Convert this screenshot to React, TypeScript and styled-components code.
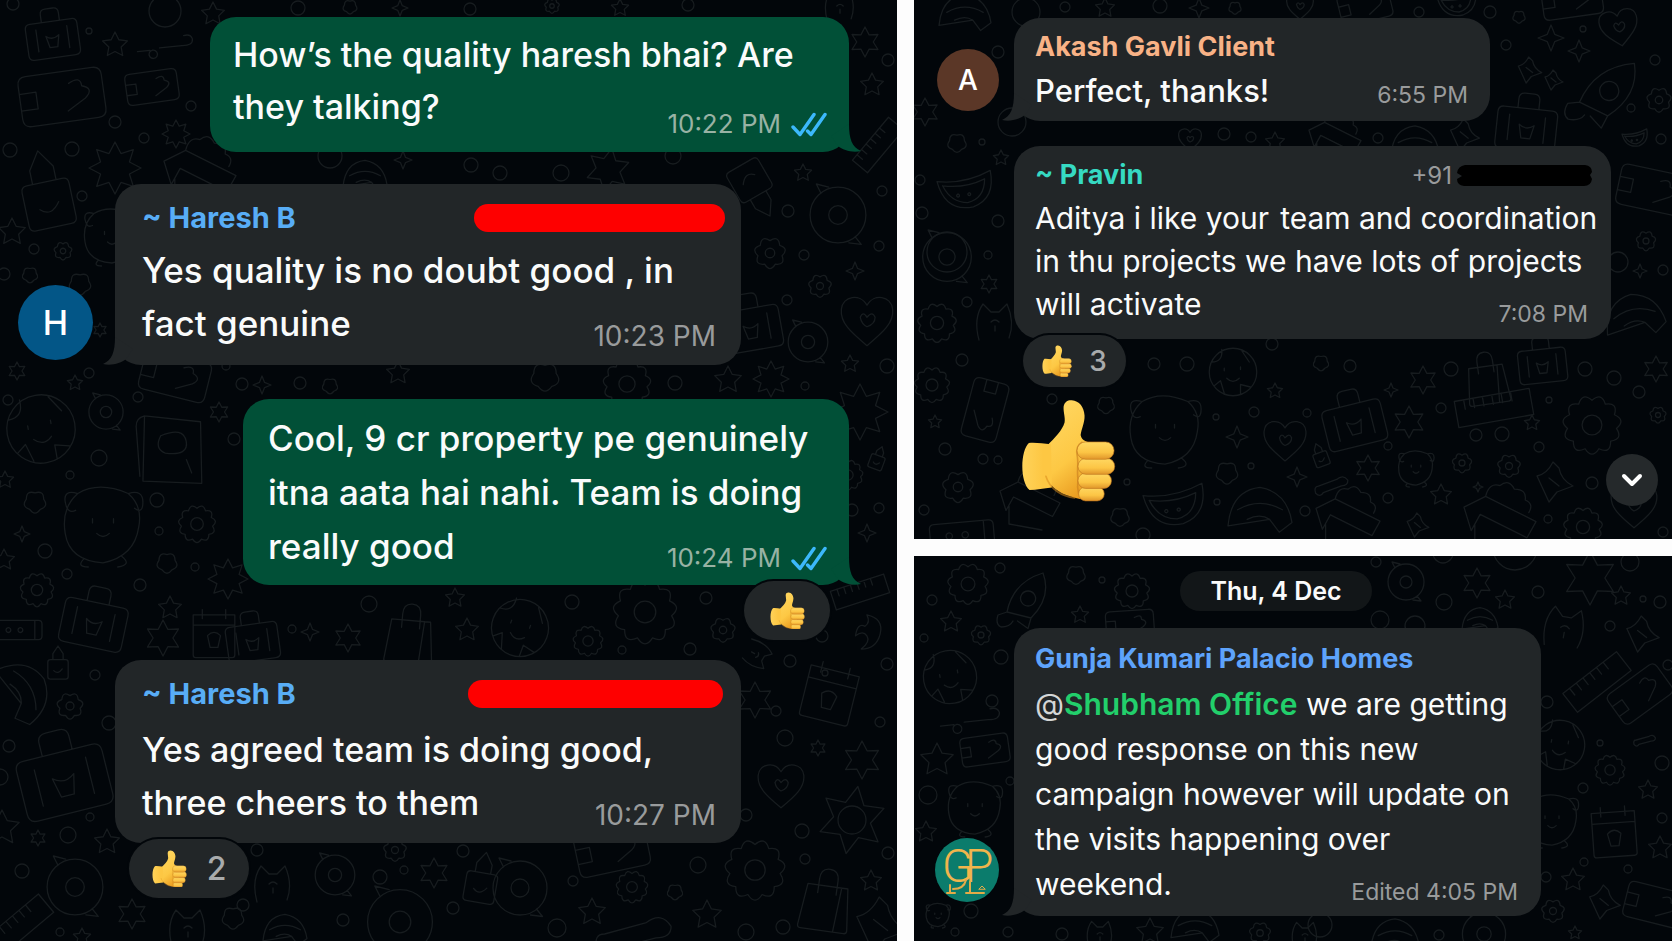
import React from 'react';
import styled, { createGlobalStyle } from 'styled-components';
import { ChevronDown } from 'lucide-react';

const GlobalStyle = createGlobalStyle`
  *, *::before, *::after { box-sizing: border-box; }
  body {
    margin: 0;
    background: #fdfdfd;
    font-family: Inter, Roboto, 'Liberation Sans', sans-serif;
    -webkit-font-smoothing: antialiased;
  }
  p, h2, time { margin: 0; }
`;

/* ---------- wallpaper ---------- */

type Doodle = [kind: string, x: number, y: number, size?: number, turn?: number];

const polar = (r: number, a: number) =>
  `${(r * Math.sin(a)).toFixed(1)} ${(-r * Math.cos(a)).toFixed(1)}`;

const starPath = (points: number, outer: number, inner: number) => {
  const parts: string[] = [];
  for (let i = 0; i < points * 2; i++) {
    parts.push(polar(i % 2 ? inner : outer, (Math.PI * i) / points));
  }
  return `M${parts.join('L')}Z`;
};

const wavyPath = (lobes: number, r: number, depth: number) => {
  let d = `M${polar(r - depth, 0)}`;
  for (let i = 0; i < lobes; i++) {
    const mid = (Math.PI * 2 * (i + 0.5)) / lobes;
    const end = (Math.PI * 2 * (i + 1)) / lobes;
    d += `Q${polar(r + depth, mid)} ${polar(r - depth, end)}`;
  }
  return `${d}Z`;
};

const circle = (x: number, y: number, r: number) =>
  `M${x - r} ${y}a${r} ${r} 0 1 0 ${2 * r} 0a${r} ${r} 0 1 0 ${-2 * r} 0`;

/* every shape is drawn about its centre inside a radius of 20 */
const shapes: Record<string, string> = {
  dot: circle(0, 0, 20),
  star: starPath(5, 20, 10),
  star4: starPath(4, 20, 8),
  star6: starPath(6, 20, 11),
  star8: starPath(8, 20, 12),
  gear: wavyPath(11, 18, 3) + circle(0, 0, 6),
  flower: wavyPath(7, 17, 4) + circle(0, 0, 5),
  cloud: wavyPath(5, 17, 4),
  donut: circle(0, 0, 18) + circle(0, 0, 6) + 'M-11 -14l-3 -6l8 2M11 14l4 5l-8 -1',
  heart: 'M0 19C-12 9 -20 2 -19 -8C-18 -18 -5 -20 0 -11C5 -20 18 -18 19 -8C20 2 12 9 0 19ZM-5 -2q2 -5 5 0q4 -5 6 0q0 5 -6 7q-4 -2 -5 -7',
  case: 'M-16 -9h32q4 0 4 4v20q0 4 -4 4h-32q-4 0 -4 -4v-20q0 -4 4 -4ZM-7 -9v-6q0 -4 4 -4h6q4 0 4 4v6M-12 -4v17M12 -4v17M-5 2q5 4 10 0l-2 9h-6Z',
  bag: 'M-13 -9h26l3 27q0 2 -2 2h-28q-2 0 -2 -2ZM-6 -4v-9q0 -7 6 -7t6 7v9M9 -9l-2 29',
  card: 'M-16 -12h32q4 0 4 4v16q0 4 -4 4h-32q-4 0 -4 -4v-16q0 -4 4 -4ZM-20 -4h8v8h-8M4 -6q6 -3 6 2q6 2 1 6l-9 5',
  phone: 'M-17 -8h34q3 0 3 3v10q0 3 -3 3h-34q-3 0 -3 -3v-10q0 -3 3 -3ZM-6 0a2 2 0 1 0 0 .1M4 0a2 2 0 1 0 0 .1M14 -8v16',
  face: circle(0, 0, 19) + 'M-17 -8q9 0 8 -10M7 -17l6 9M-7 -3v2M6 -4v2M-5 5q5 5 10 0M-15 11l5 -4l3 10M14 12l-8 -2v8',
  bear: 'M-12 -15q10 -6 24 0q7 6 5 16q-2 14 -17 17q-16 -1 -18 -14q-2 -12 6 -19ZM-12 -15q-7 -2 -6 4t5 4M12 -15q7 -2 7 4t-4 3M-5 -3v2M5 -3v2M-3 4q3 3 6 0M-9 16q-4 4 2 4M9 15q5 4 -2 5',
  bottle: 'M-9 -4h18q3 0 3 3v17q0 3 -3 3h-18q-3 0 -3 -3v-17q0 -3 3 -3ZM-6 -4v-7l6 -9l6 9v7M-5 9q5 5 10 -2',
  wand: 'M-20 2h9M-9 2a3 3 0 1 0 .1 0M-4 1h16M12 1q8 1 8 -4q-1 -4 -6 -3',
  rocket: 'M-12 8q4 -20 24 -26q6 16 -8 30ZM-12 8l-6 2q-2 6 2 8q6 0 8 -4M2 -6a5 5 0 1 0 .1 0M-12 8l16 4l-2 7l-7 -5',
  melon: 'M-20 -6q20 2 38 -8q4 20 -12 26q-20 4 -26 -18ZM-16 -3q16 2 30 -5q0 14 -12 17q-12 0 -18 -12M-5 3a1 1 0 1 0 .1 0M3 2a1 1 0 1 0 .1 0',
  book: 'M-16 -14l28 -3l7 30l-29 5ZM-16 -14q-4 2 -3 6l7 24M-6 -6q10 -7 13 0t-9 8q-6 -1 -4 -8M9 3l4 6',
  crate: 'M-20 -6l12 -6l28 14l-5 9l-26 -13l-5 9ZM-8 -12q2 -8 8 -6q5 -4 8 2q7 0 6 6q5 2 2 7M-14 4l0 12l22 4',
  calendar: 'M-16 -14h32v31q0 2 -2 2h-28q-2 0 -2 -2ZM-16 -6h32M-9 -18v7M9 -18v7M-5 2q5 -5 10 0l-2 9h-6Z',
  ruler: 'M-20 -7h40v14h-40ZM-15 -7v5M-10 -7v5M-5 -7v5M0 -7v5M5 -7v5M10 -7v5',
  hat: 'M-20 8q2 -22 20 -24q17 3 20 22l-8 6l-6 -8ZM-14 -2q14 -8 28 0M-8 4q8 -4 14 0',
  moon: 'M2 -18q18 4 14 20t-20 16q10 -8 6 -14t-12 0q2 -14 10 -10q6 -4 2 -12',
  wrench: 'M-20 8q-2 -8 4 -8l22 -6q8 -6 13 2q0 6 -8 6l-22 6q-4 6 -9 0Z',
  cat: 'M-16 18q-6 -22 4 -36l8 8h8l8 -8q8 18 2 34M-4 0q4 -4 8 0M0 4v5',
  sheet: 'M-18 -6q10 -2 16 -14l6 6q2 12 14 18l-16 6l-8 10ZM-6 -4l10 8',
};

const leftDoodles: Doodle[] = [
  ['case', 52, 33, 26, -8], ['dot', 165, 11, 16], ['dot', 89, 31, 3], ['star', 115, 45, 13], ['wand', 165, 46, 28, -6],
  ['card', 62, 97, 42, -8], ['dot', 13, 4, 6], ['card', 152, 87, 26, -8], ['dot', 191, 106, 5], ['dot', 115, 122, 6],
  ['dot', 144, 138, 5], ['star8', 176, 134, 14], ['dot', 10, 150, 7], ['dot', 72, 149, 7], ['bottle', 46, 190, 40, -12],
  ['star8', 115, 168, 26], ['dot', 82, 196, 5], ['crate', 200, 172, 36], ['bear', 112, 236, 30], ['flower', 63, 251, 11],
  ['dot', 34, 249, 5], ['dot', 4, 274, 6], ['cloud', 30, 275, 10], ['cloud', 80, 284, 14], ['star', 12, 232, 14], ['star6', 17, 371, 9],
  ['star', 75, 383, 8], ['dot', 89, 373, 5], ['card', 175, 376, 34, 14], ['dot', 242, 384, 6], ['star4', 262, 385, 9],
  ['dot', 300, 383, 6], ['star', 398, 373, 12], ['cloud', 330, 386, 10], ['dot', 226, 366, 4], ['star6', 100, 330, 7],
  ['dot', 8, 400, 5], ['star', 213, 14, 12], ['dot', 298, 8, 7], ['cloud', 350, 7, 9], ['star4', 400, 8, 8], ['dot', 470, 9, 6], ['flower', 552, 6, 9],
  ['star', 620, 8, 9], ['dot', 688, 5, 6], ['cat', 840, 6, 16], ['dot', 330, 156, 12], ['hat', 365, 178, 22], ['star4', 403, 160, 9],
  ['face', 41, 429, 36, -10], ['donut', 106, 412, 19], ['dot', 138, 397, 5], ['star6', 219, 412, 10], ['book', 170, 450, 40, 12],
  ['dot', 99, 458, 8], ['dot', 70, 475, 4], ['dot', 234, 439, 6], ['star', 5, 480, 9], ['cloud', 35, 502, 14],
  ['bear', 103, 525, 42], ['dot', 157, 500, 7], ['dot', 159, 531, 4], ['gear', 197, 524, 21], ['star4', 22, 534, 8],
  ['dot', 45, 551, 7], ['cloud', 167, 563, 13], ['dot', 195, 567, 4], ['star8', 228, 579, 20], ['star', 4, 560, 11],
  ['gear', 37, 590, 19], ['dot', 67, 574, 5], ['case', 95, 617, 32, 12], ['dot', 140, 585, 6], ['star', 170, 608, 12],
  ['star6', 163, 638, 18], ['phone', 18, 630, 24], ['calendar', 214, 633, 26], ['case', 252, 636, 26, -8], ['dot', 292, 629, 4],
  ['star4', 310, 632, 9], ['star6', 348, 638, 14], ['dot', 369, 604, 8], ['bag', 410, 634, 30, 5], ['bottle', 58, 663, 17],
  ['hat', 22, 692, 32, 60], ['dot', 95, 675, 5], ['flower', 70, 706, 16], ['dot', 109, 723, 7], ['dot', 9, 746, 6],
  ['case', 62, 772, 44, -14], ['dot', 0, 777, 8], ['dot', 68, 835, 8], ['star6', 38, 838, 8], ['star', 107, 842, 13],
  ['star', 2, 828, 18], ['dot', 90, 817, 4], ['dot', 22, 871, 7], ['donut', 75, 887, 31], ['star6', 132, 914, 15], ['dot', 60, 932, 4],
  ['ruler', 20, 925, 34, -40], ['star', 82, 937, 9], ['cat', 273, 884, 20], ['donut', 335, 875, 22], ['dot', 380, 877, 7],
  ['dot', 404, 870, 4], ['star6', 434, 873, 15], ['cloud', 233, 918, 14], ['dot', 243, 905, 6], ['dot', 343, 920, 6],
  ['cat', 188, 928, 20], ['hat', 285, 932, 22], ['donut', 400, 922, 36], ['dot', 257, 850, 6], ['flower', 395, 850, 14],
  ['star6', 865, 42, 15], ['ruler', 878, 145, 28, -50], ['dot', 471, 165, 7], ['dot', 500, 173, 7], ['star6', 608, 170, 22, 10],
  ['dot', 561, 173, 8], ['dot', 673, 156, 8], ['star', 803, 173, 9], ['bottle', 755, 190, 30, 150], ['donut', 838, 215, 31],
  ['dot', 788, 211, 6], ['dot', 882, 191, 5], ['dot', 879, 246, 5], ['flower', 770, 253, 19], ['dot', 804, 255, 5],
  ['star4', 855, 271, 9], ['flower', 820, 286, 14], ['dot', 787, 300, 5], ['heart', 867, 320, 27], ['case', 750, 322, 30, -10],
  ['donut', 808, 342, 22], ['star', 850, 364, 9], ['dot', 887, 366, 7], ['star8', 771, 379, 18], ['gear', 627, 384, 27],
  ['cloud', 545, 377, 18], ['dot', 675, 383, 7], ['star', 728, 380, 14], ['dot', 805, 386, 4], ['star8', 860, 412, 28], ['bottle', 878, 458, 12, 20],
  ['gear', 848, 475, 17], ['dot', 852, 510, 6], ['dot', 879, 508, 5], ['star4', 867, 533, 9], ['star', 872, 85, 12], ['dot', 888, 60, 6],
  ['star', 455, 598, 10], ['face', 520, 628, 30, 20], ['dot', 572, 602, 7], ['gear', 645, 612, 36], ['star', 467, 630, 12],
  ['gear', 588, 641, 17], ['flower', 723, 630, 15], ['dot', 690, 649, 6], ['dot', 706, 598, 6], ['moon', 865, 632, 19],
  ['ruler', 860, 592, 28, -18], ['cat', 757, 655, 14, 120], ['dot', 790, 661, 6], ['dot', 822, 636, 6], ['dot', 622, 650, 4],
  ['calendar', 830, 692, 31, 14], ['star6', 755, 700, 18], ['dot', 785, 738, 8], ['dot', 776, 711, 5], ['star6', 818, 748, 8],
  ['star6', 862, 760, 19], ['heart', 781, 785, 24], ['star6', 852, 820, 34, 10], ['dot', 852, 820, 14], ['dot', 825, 673, 3],
  ['dot', 880, 722, 5], ['dot', 746, 815, 6], ['dot', 802, 831, 7], ['gear', 755, 870, 34], ['dot', 805, 859, 5],
  ['bag', 826, 900, 31, 8], ['star', 871, 881, 11], ['star', 707, 915, 15], ['gear', 632, 887, 18], ['dot', 698, 865, 8],
  ['cloud', 675, 892, 10], ['star', 592, 912, 14], ['donut', 520, 888, 30], ['bottle', 482, 878, 26, 10], ['dot', 573, 881, 5],
  ['dot', 463, 851, 6], ['dot', 453, 908, 6], ['dot', 557, 928, 9], ['dot', 746, 932, 8], ['dot', 783, 927, 7],
  ['wrench', 635, 934, 38], ['card', 612, 850, 36, -12], ['sheet', 882, 925, 28], ['dot', 888, 853, 6], ['dot', 887, 664, 6],
];

const topDoodles: Doodle[] = [
  ['hat', 965, 15, 26], ['dot', 1026, 12, 14], ['dot', 1065, 7, 5], ['star', 1105, 8, 10], ['dot', 1160, 6, 7], ['star4', 1199, 8, 10], ['cloud', 1235, 8, 8],
  ['heart', 1300, 6, 14], ['card', 1365, 6, 26, -14], ['dot', 998, 52, 6], ['star6', 925, 112, 14], ['cloud', 957, 143, 12],
  ['dot', 982, 142, 3], ['star', 1001, 158, 8], ['melon', 965, 190, 28], ['dot', 920, 180, 5], ['dot', 922, 213, 6],
  ['dot', 998, 221, 6], ['donut', 947, 257, 27], ['dot', 947, 252, 20], ['dot', 988, 255, 4], ['star6', 989, 284, 9], ['gear', 937, 323, 22],
  ['cat', 995, 322, 20], ['dot', 967, 302, 5], ['dot', 1012, 122, 14], ['dot', 1251, 137, 5], ['dot', 1224, 134, 6], ['heart', 1190, 139, 12], ['star', 1275, 142, 10],
  ['crate', 1335, 138, 26], ['dot', 1378, 138, 5], ['hat', 1415, 145, 24], ['sheet', 1465, 135, 16],
  ['dot', 1419, 12, 5], ['melon', 1457, 3, 20], ['dot', 1490, 12, 6], ['card', 1572, -1, 30, -8], ['cloud', 1519, 17, 8],
  ['dot', 1506, 45, 5], ['star4', 1551, 38, 13], ['star4', 1579, 51, 11], ['heart', 1619, 27, 20, -10], ['dot', 1583, 29, 3],
  ['rocket', 1605, 92, 38, 12], ['dot', 1655, 60, 5], ['flower', 1659, 100, 15], ['sheet', 1530, 70, 13], ['sheet', 1554, 80, 10],
  ['case', 1527, 122, 30, 6], ['dot', 1631, 108, 4], ['melon', 1635, 138, 13], ['dot', 1661, 139, 5], ['card', 1652, 190, 34, 12],
  ['flower', 1646, 241, 12], ['dot', 1618, 262, 10], ['star4', 1640, 271, 7], ['dot', 1663, 270, 5], ['hat', 1635, 318, 30, -10],
  ['cloud', 1321, 363, 10], ['dot', 1350, 366, 6], ['star6', 1423, 380, 14], ['dot', 1451, 369, 7], ['bag', 1487, 378, 26, -8],
  ['ruler', 1494, 408, 38, -10], ['case', 1542, 360, 24, -6], ['dot', 1585, 369, 7], ['dot', 1614, 378, 7], ['star6', 1656, 369, 13],
  ['case', 1353, 418, 30, -14], ['star6', 1409, 422, 16], ['dot', 1441, 408, 5], ['star4', 1391, 390, 7], ['dot', 1307, 413, 4],
  ['dot', 1476, 435, 6], ['dot', 1502, 434, 7], ['star', 1532, 423, 8], ['dot', 1549, 400, 3], ['gear', 1592, 425, 33],
  ['dot', 1639, 392, 6], ['flower', 1658, 415, 10], ['star6', 1368, 468, 13], ['dot', 1388, 446, 4], ['bear', 1416, 468, 19],
  ['flower', 1462, 463, 12], ['flower', 1509, 466, 14], ['dot', 1539, 447, 5], ['sheet', 1555, 482, 20], ['dot', 1592, 483, 6],
  ['wrench', 1332, 485, 17, -5], ['star', 1441, 495, 11], ['dot', 1388, 498, 5], ['star4', 1478, 487, 5], ['crate', 1348, 518, 32],
  ['crate', 1500, 518, 36], ['dot', 1548, 519, 4], ['gear', 1583, 527, 22], ['heart', 1634, 505, 24], ['dot', 1305, 511, 5],
  ['sheet', 1418, 525, 12], ['dot', 1663, 532, 5], ['bottle', 1320, 455, 12, -20],
  ['gear', 932, 385, 20], ['dot', 962, 360, 6], ['card', 985, 410, 30, 105], ['dot', 1052, 399, 5], ['cloud', 1106, 405, 11],
  ['star', 935, 422, 7], ['dot', 945, 449, 6], ['dot', 983, 459, 5], ['dot', 998, 460, 4], ['flower', 958, 487, 19],
  ['crate', 1030, 500, 30], ['cloud', 1120, 517, 12], ['dot', 924, 510, 5], ['phone', 962, 535, 32, -5], ['dot', 1154, 364, 6],
  ['dot', 1187, 364, 7], ['face', 1233, 372, 25], ['star', 1275, 391, 8], ['dot', 1272, 344, 6], ['bear', 1165, 430, 38],
  ['dot', 1216, 417, 3], ['dot', 1254, 412, 5], ['star4', 1237, 437, 11], ['cloud', 1227, 473, 14], ['heart', 1285, 440, 22],
  ['star4', 1297, 477, 10], ['dot', 1251, 466, 3], ['melon', 1174, 505, 31], ['hat', 1260, 513, 32], ['dot', 1217, 502, 3],
  ['dot', 1143, 535, 7], ['dot', 1127, 482, 3],
];

const bottomDoodles: Doodle[] = [
  ['gear', 968, 584, 23], ['dot', 1000, 568, 5], ['dot', 932, 600, 5], ['cloud', 1076, 575, 12], ['dot', 1102, 580, 3],
  ['gear', 1132, 591, 20], ['rocket', 1025, 600, 30], ['star', 951, 622, 11], ['dot', 924, 638, 4], ['flower', 981, 635, 12],
  ['star', 1080, 615, 9], ['card', 1130, 625, 24, -4], ['face', 950, 677, 28, -10], ['dot', 992, 701, 6], ['dot', 1001, 657, 7], ['wand', 970, 720, 30, -6],
  ['star', 937, 760, 17], ['card', 985, 750, 24, -8], ['dot', 928, 795, 9], ['bear', 975, 808, 29], ['star', 926, 832, 11], ['dot', 1010, 781, 4],
  ['dot', 971, 911, 7], ['bear', 938, 915, 13], ['dot', 955, 932, 4], ['flower', 1260, 933, 13], ['hat', 1195, 928, 24],
  ['dot', 1008, 932, 5], ['star', 1150, 932, 14], ['dot', 1062, 934, 6], ['cat', 1100, 934, 14], ['cat', 1305, 935, 14],
  ['donut', 1406, 582, 20], ['star6', 1477, 583, 15], ['dot', 1444, 602, 8], ['dot', 1376, 562, 5], ['star', 1505, 600, 10],
  ['dot', 1538, 592, 6], ['star6', 1590, 578, 27], ['star', 1621, 596, 10], ['dot', 1643, 599, 3], ['dot', 1660, 602, 6],
  ['dot', 1515, 548, 22], ['dot', 1443, 553, 10], ['dot', 1630, 562, 9], ['cat', 1565, 628, 22, 10], ['dot', 1610, 626, 5], ['sheet', 1643, 634, 18],
  ['ruler', 1597, 682, 34, -38], ['card', 1640, 694, 30, -36], ['dot', 1547, 702, 6], ['face', 1560, 745, 26, 10], ['dot', 1600, 743, 3],
  ['wrench', 1645, 740, 11], ['gear', 1610, 770, 17], ['dot', 1662, 763, 7], ['dot', 1583, 788, 5], ['star', 1648, 790, 10],
  ['calendar', 1614, 831, 27, -4], ['dot', 1662, 818, 5], ['bear', 1552, 820, 28], ['star', 1660, 848, 12], ['dot', 1584, 862, 4],
  ['dot', 1628, 869, 4], ['star', 1573, 880, 12], ['sheet', 1605, 902, 17], ['flower', 1553, 911, 14], ['card', 1655, 905, 30, 14],
  ['dot', 1546, 877, 5], ['dot', 1439, 935, 5], ['donut', 1484, 934, 24], ['dot', 1320, 925, 12], ['hat', 1395, 938, 24],
  ['star', 1575, 933, 7], ['hat', 1480, 622, 18], ['dot', 1415, 626, 10], ['dot', 1380, 620, 9], ['dot', 1668, 665, 5],
];

const WallpaperSvg = styled.svg`
  position: absolute;
  inset: 0;
  width: 100%;
  height: 100%;
  z-index: 0;
  pointer-events: none;
  fill: none;
  stroke: #171c1f;
  stroke-linecap: round;
  stroke-linejoin: round;
`;

function Wallpaper({ view, doodles }: { view: string; doodles: Doodle[] }) {
  return (
    <WallpaperSvg viewBox={view} preserveAspectRatio="xMinYMin slice" aria-hidden="true">
      {doodles.map(([kind, x, y, size = 20, turn = 0], i) => (
        <path
          key={i}
          d={shapes[kind]}
          strokeWidth={1.3 / (size / 20)}
          transform={`translate(${x} ${y}) rotate(${turn}) scale(${size / 20})`}
        />
      ))}
    </WallpaperSvg>
  );
}

/* ---------- page ---------- */

const Page = styled.main`
  display: grid;
  grid-template-columns: minmax(0, 897fr) minmax(0, 758fr);
  column-gap: 17px;
  min-height: 100vh;
`;

const RightColumn = styled.div`
  display: grid;
  grid-template-rows: auto 1fr;
  row-gap: 17px;
`;

const Panel = styled.section<{ $pad: string }>`
  position: relative;
  display: flex;
  flex-direction: column;
  overflow: hidden;
  padding: ${(p) => p.$pad};
  background: #02060a;

  > * { flex-shrink: 0; }
`;

/* ---------- messages ---------- */

const Row = styled.article<{ $out?: boolean; $above?: number; $gap?: number }>`
  position: relative;
  display: flex;
  align-items: flex-end;
  justify-content: ${(p) => (p.$out ? 'flex-end' : 'flex-start')};
  gap: ${(p) => p.$gap ?? 22}px;
  margin-top: ${(p) => p.$above ?? 0}px;
`;

const Avatar = styled.div<{ $size: number; $color?: string; $lift?: number }>`
  display: grid;
  place-items: center;
  flex: none;
  width: ${(p) => p.$size}px;
  height: ${(p) => p.$size}px;
  margin-bottom: ${(p) => p.$lift ?? 0}px;
  border-radius: 50%;
  overflow: hidden;
  background: ${(p) => p.$color ?? 'transparent'};
  color: #fff;
  font-size: ${(p) => (p.$size > 70 ? 34 : 28)}px;
  font-weight: 500;
`;

const Bubble = styled.div<{ $width: number; $out?: boolean; $pad: string }>`
  position: relative;
  display: grid;
  width: ${(p) => p.$width}px;
  max-width: 100%;
  padding: ${(p) => p.$pad};
  border-radius: 26px;
  background: ${(p) => (p.$out ? '#015037' : '#222628')};
`;

const TailSvg = styled.svg<{ $out?: boolean }>`
  position: absolute;
  bottom: 0;
  ${(p) => (p.$out ? 'right: -12px; transform: scaleX(-1);' : 'left: -12px;')}
  fill: ${(p) => (p.$out ? '#015037' : '#222628')};
`;

function Tail({ out }: { out?: boolean }) {
  return (
    <TailSvg $out={out} width="30" height="28" viewBox="0 0 30 28" aria-hidden="true">
      <path d="M12 0C12 15 9 23 0 27C9 29 18 26 23 22L30 12Z" />
    </TailSvg>
  );
}

const Header = styled.header<{ $height: number; $bleed?: number }>`
  display: flex;
  align-items: center;
  height: ${(p) => p.$height}px;
  margin-right: ${(p) => -(p.$bleed ?? 0)}px;
`;

const Sender = styled.h2<{ $color: string; $size: number }>`
  margin-right: auto;
  color: ${(p) => p.$color};
  font-size: ${(p) => p.$size}px;
  font-weight: 700;
  line-height: 36px;
  white-space: nowrap;
`;

const Content = styled.div<{ $above?: number }>`
  display: grid;
  margin-top: ${(p) => p.$above ?? 0}px;
`;

const Body = styled.p<{ $size: number; $lead: number; $below?: number; $bleed?: number; $weight?: number }>`
  grid-area: 1 / 1;
  margin-right: ${(p) => -(p.$bleed ?? 0)}px;
  padding-bottom: ${(p) => p.$below ?? 0}px;
  color: #fafbfb;
  font-size: ${(p) => p.$size}px;
  font-weight: ${(p) => p.$weight ?? 450};
  line-height: ${(p) => p.$lead}px;
`;

const Meta = styled.div<{ $size: number; $out?: boolean; $lift?: number }>`
  grid-area: 1 / 1;
  align-self: end;
  justify-self: end;
  display: flex;
  align-items: center;
  gap: 10px;
  margin-bottom: ${(p) => p.$lift ?? 0}px;
  color: ${(p) => (p.$out ? '#98b2a4' : '#999b9c')};
  font-size: ${(p) => p.$size}px;
  line-height: 28px;
  white-space: nowrap;
`;

const Mention = styled.a`
  color: #22cf6b;
  font-weight: 600;
  text-decoration: none;
`;

const At = styled.span`
  color: #d4d6d6;
`;

const Redaction = styled.span<{ $width: number }>`
  width: ${(p) => p.$width}px;
  height: 28px;
  border-radius: 14px;
  background: #fe0000;
`;

const Phone = styled.span`
  display: flex;
  align-items: center;
  gap: 5px;
  color: #999b9c;
  font-size: 24px;
`;

const Reaction = styled.button<{ $large?: boolean; $single?: boolean; $left?: number; $right?: number }>`
  position: relative;
  display: flex;
  align-items: center;
  align-self: ${(p) => (p.$right ? 'flex-end' : 'flex-start')};
  justify-content: center;
  gap: ${(p) => (p.$large ? 20 : 17)}px;
  width: ${(p) => (p.$single ? 86 : p.$large ? 120 : 103)}px;
  height: ${(p) => (p.$large ? 59 : 52)}px;
  margin: -4px ${(p) => p.$right ?? 0}px 0 ${(p) => p.$left ?? 0}px;
  padding: 0;
  border: 0;
  border-radius: 30px;
  background: #222628;
  box-shadow: 0 0 0 2px #02060a;
  color: #a9abac;
  font-family: inherit;
  font-size: ${(p) => (p.$large ? 32 : 28)}px;
  font-weight: 500;
`;

const Sticker = styled.div`
  position: relative;
  width: 95px;
  height: 104px;
  margin: 12px 0 0 84px;
`;

const ScrollButton = styled.button`
  position: absolute;
  right: 14px;
  bottom: 33px;
  display: grid;
  place-items: center;
  width: 52px;
  height: 52px;
  padding: 0;
  border: 0;
  border-radius: 50%;
  background: #25292b;
  color: #fff;
`;

const DateRow = styled.div`
  position: relative;
  display: flex;
  justify-content: center;
  padding-right: 32px;
`;

const DatePill = styled.time`
  padding: 0 30px;
  border-radius: 20px;
  background: #121618;
  color: #fafbfb;
  font-size: 25px;
  font-weight: 600;
  line-height: 40px;
`;

/* ---------- drawings ---------- */

function Ticks() {
  return (
    <svg width="36" height="25" viewBox="0 0 36 25" fill="none" stroke="#3cb8fb" strokeWidth="3.400" strokeLinecap="round" strokeLinejoin="round" role="img" aria-label="Read">
      <path d="M2 15L9 22.500L23 2.500" />
      <path d="M16.500 19L20 22.500L34 2.500" />
    </svg>
  );
}

function Thumb({ width }: { width: number }) {
  const id = React.useId();
  const skin = `${id}skin`;
  const finger = `${id}finger`;
  const wrist = `${id}wrist`;
  return (
    <svg width={width} viewBox="0 0 290 314" role="img" aria-label="Thumbs up">
      <defs>
        <linearGradient id={skin} x1="0.2" y1="0" x2="0.6" y2="1">
          <stop offset="0" stopColor="#ffd761" />
          <stop offset="0.6" stopColor="#fdc844" />
          <stop offset="1" stopColor="#e99a1f" />
        </linearGradient>
        <linearGradient id={wrist} x1="0" y1="0" x2="1" y2="0">
          <stop offset="0" stopColor="#ffd35a" />
          <stop offset="0.7" stopColor="#fdc743" />
          <stop offset="1" stopColor="#fdc743" />
        </linearGradient>
        <linearGradient id={finger} x1="0" y1="0" x2="0" y2="1">
          <stop offset="0" stopColor="#ffd862" />
          <stop offset="0.6" stopColor="#fcc545" />
          <stop offset="1" stopColor="#e0952a" />
        </linearGradient>
      </defs>
      <path fill={`url(#${skin})`} d="M80 142C104 118 126 96 133 72C136 58 129 42 130 24C132 8 144 3 155 4C178 6 192 24 194 50C195 72 184 92 182 110C184 124 196 130 214 134L230 300C210 312 184 308 160 300C126 292 100 276 84 252Z" />
      <path fill={`url(#${wrist})`} d="M24 134C46 132 66 136 92 138L94 270C70 272 48 278 26 278C-4 252 -2 158 24 134Z" />
      <path fill="none" stroke="#d98a1c" strokeOpacity="0.55" strokeWidth="5" strokeLinecap="round" d="M76 236C88 276 126 298 164 302" />
      <path fill="none" stroke="#c87c1c" strokeOpacity="0.6" strokeWidth="5" strokeLinecap="round" d="M186 132C172 140 168 158 172 176C176 200 170 222 174 244C172 260 172 274 176 290" />
      <g stroke="#bd731c" strokeOpacity="0.65" strokeWidth="3" fill={`url(#${finger})`}>
        <rect x="176" y="268" width="78" height="43" rx="21" />
        <rect x="174" y="226" width="102" height="47" rx="23" />
        <rect x="174" y="181" width="112" height="49" rx="24" />
        <rect x="171" y="131" width="113" height="53" rx="26" />
      </g>
    </svg>
  );
}

function Monogram() {
  return (
    <svg width="64" height="64" viewBox="0 0 64 64" role="img" aria-label="GP logo">
      <rect width="64" height="64" fill="#0b7c6c" />
      <g fill="#f0b54c" fontFamily="Roboto, sans-serif" fontSize="46" fontWeight="300">
        <text x="7" y="44">G</text>
        <text x="30" y="44">P</text>
      </g>
      <g fill="none" stroke="#e3ab48" strokeWidth="2" strokeLinecap="round">
        <path d="M35 44v10M31 55h18M15 47v7M12 55h8M18 51q11 0 13 -9" />
        <path d="M44 51l3 -3l3 3z" strokeWidth="1" />
      </g>
    </svg>
  );
}

function BlackMarker() {
  return (
    <svg width="136" height="21" viewBox="0 0 136 21" aria-hidden="true">
      <path d="M8 0H128Q135 1 135 7L133 10L135 14Q134 21 127 21H7Q0 20 0 14L5 11L0 8Q1 1 8 0Z" fill="#000" />
    </svg>
  );
}

/* ---------- app ---------- */

export default function App() {
  return (
    <>
      <GlobalStyle />
      <Page>
        <Panel $pad="17px 48px 43px 18px" aria-label="Chat with Haresh B">
          <Wallpaper view="0 0 897 941" doodles={leftDoodles} />

          <Row $out>
            <Bubble $out $width={639} $pad="12px 22px 14px 23px">
              <Content>
                <Body $size={34} $lead={52} $below={5} $weight={500}>How’s the quality haresh bhai? Are they talking?</Body>
                <Meta $size={26} $out><time>10:22 PM</time><Ticks /></Meta>
              </Content>
              <Tail out />
            </Bubble>
          </Row>

          <Row $above={32}>
            <Avatar $size={75} $color="#035687" $lift={5}>H</Avatar>
            <Bubble $width={626} $pad="14px 25px 15px 27px">
              <Header $height={40} $bleed={9}>
                <Sender $color="#58adf6" $size={29}>~ Haresh B</Sender>
                <Redaction $width={251} />
              </Header>
              <Content $above={6}>
                <Body $size={35} $lead={53}>Yes quality is no doubt good , in fact genuine</Body>
                <Meta $size={28}><time>10:23 PM</time></Meta>
              </Content>
              <Tail />
            </Bubble>
          </Row>

          <Row $out $above={34}>
            <Bubble $out $width={606} $pad="12px 22px 12px 25px">
              <Content>
                <Body $size={35} $lead={54}>Cool, 9 cr property pe genuinely itna aata hai nahi. Team is doing really good</Body>
                <Meta $size={26} $out $lift={1}><time>10:24 PM</time><Ticks /></Meta>
              </Content>
              <Tail out />
            </Bubble>
          </Row>
          <Reaction $large $single $right={19}><Thumb width={35} /></Reaction>

          <Row $above={20}>
            <Avatar $size={75} />
            <Bubble $width={626} $pad="14px 25px 14px 27px">
              <Header $height={40} $bleed={7}>
                <Sender $color="#58adf6" $size={29}>~ Haresh B</Sender>
                <Redaction $width={255} />
              </Header>
              <Content $above={9}>
                <Body $size={34} $lead={53} $weight={500}>Yes agreed team is doing good, three cheers to them</Body>
                <Meta $size={28}><time>10:27 PM</time></Meta>
              </Content>
            </Bubble>
          </Row>
          <Reaction $large $left={111}><Thumb width={35} />2</Reaction>
        </Panel>

        <RightColumn>
          <Panel $pad="18px 23px 36px 23px" aria-label="Client group chat">
            <Wallpaper view="914 0 758 539" doodles={topDoodles} />

            <Row $gap={15}>
              <Avatar $size={62} $color="#5b3727" $lift={10}>A</Avatar>
              <Bubble $width={476} $pad="11px 22px 9px 21px">
                <Header $height={36}>
                  <Sender $color="#f8b286" $size={27}>Akash Gavli Client</Sender>
                </Header>
                <Content $above={4}>
                  <Body $size={31} $lead={43}>Perfect, thanks!</Body>
                  <Meta $size={23} $lift={3}><time>6:55 PM</time></Meta>
                </Content>
                <Tail />
              </Bubble>
            </Row>

            <Row $gap={15} $above={25}>
              <Avatar $size={62} />
              <Bubble $width={597} $pad="11px 23px 13px 21px">
                <Header $height={36} $bleed={5}>
                  <Sender $color="#36dac3" $size={27}>~ Pravin</Sender>
                  <Phone>+91<BlackMarker /></Phone>
                </Header>
                <Content $above={4}>
                  <Body $size={30} $lead={43} $bleed={16} $weight={400}>Aditya i like your{'\u200a'} team and coordination in thu projects we have lots of projects will activate</Body>
                  <Meta $size={23} $lift={-2}><time>7:08 PM</time></Meta>
                </Content>
              </Bubble>
            </Row>
            <Reaction $left={86}><Thumb width={30} />3</Reaction>

            <Sticker><Thumb width={95} /></Sticker>
            <ScrollButton aria-label="Scroll to latest">
              <ChevronDown size={32} strokeWidth={3} />
            </ScrollButton>
          </Panel>

          <Panel $pad="15px 23px 25px 21px" aria-label="Palacio Homes chat">
            <Wallpaper view="914 556 758 385" doodles={bottomDoodles} />
            <DateRow><DatePill>Thu, 4 Dec</DatePill></DateRow>

            <Row $gap={15} $above={17}>
              <Avatar $size={64} $lift={14}><Monogram /></Avatar>
              <Bubble $width={527} $pad="13px 23px 9px 21px">
                <Header $height={36}>
                  <Sender $color="#5ea3fb" $size={27}>Gunja Kumari Palacio Homes</Sender>
                </Header>
                <Content $above={5}>
                  <Body $size={30} $lead={45} $weight={400}>
                    <At>@</At><Mention href="#shubham-office">Shubham Office</Mention> we are getting good response on this new campaign however will update on the visits happening over weekend.
                  </Body>
                  <Meta $size={23} $lift={1}><span>Edited <time>4:05 PM</time></span></Meta>
                </Content>
                <Tail />
              </Bubble>
            </Row>
          </Panel>
        </RightColumn>
      </Page>
    </>
  );
}
